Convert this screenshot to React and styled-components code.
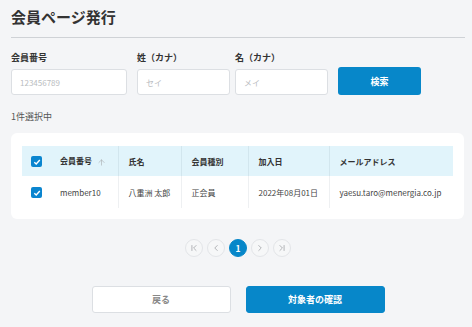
import React from 'react'
import styled, { createGlobalStyle } from 'styled-components'
import { ArrowUp, ChevronFirst, ChevronLast, ChevronLeft, ChevronRight } from 'lucide-react'

const GlobalStyle = createGlobalStyle`
  body {
    margin: 0;
    background: #f4f5f7;
    font-family: "Noto Sans CJK JP", "Noto Sans", sans-serif;
    color: #333;
  }
  * { box-sizing: border-box; }
`

const columns = [
  { key: 'id', label: '会員番号', width: 68, sort: true },
  { key: 'name', label: '氏名', width: 63 },
  { key: 'type', label: '会員種別', width: 67 },
  { key: 'joined', label: '加入日', width: 81 },
  { key: 'mail', label: 'メールアドレス', width: 124 },
]

const rows = [
  {
    id: 'member10',
    name: '八重洲 太郎',
    type: '正会員',
    joined: '2022年08月01日',
    mail: 'yaesu.taro@menergia.co.jp',
  },
]

export default function App() {
  return (
    <Page>
      <GlobalStyle />
      <Header>
        <Title>会員ページ発行</Title>
      </Header>

      <SearchForm>
        <Field $w={116} $mr={10}>
          <Label>会員番号</Label>
          <Input placeholder="123456789" />
        </Field>
        <Field $w={93} $mr={5}>
          <Label>姓（カナ）</Label>
          <Input placeholder="セイ" />
        </Field>
        <Field $w={93} $mr={10}>
          <Label>名（カナ）</Label>
          <Input placeholder="メイ" />
        </Field>
        <SearchBtn>検索</SearchBtn>
      </SearchForm>

      <SelectedCount>1件選択中</SelectedCount>

      <Card>
        <Table>
          <colgroup>
            <col style={{ width: 28 }} />
            {columns.map((c) => (
              <col key={c.key} style={{ width: c.width }} />
            ))}
          </colgroup>
          <thead>
            <tr>
              <Th $first>
                <Check />
              </Th>
              {columns.map((c, i) => (
                <Th key={c.key} $line={i > 0}>
                  {c.label}
                  {c.sort && (
                    <SortIcon>
                      <ArrowUp size={9} strokeWidth={1.6} />
                    </SortIcon>
                  )}
                </Th>
              ))}
            </tr>
          </thead>
          <tbody>
            {rows.map((r) => (
              <tr key={r.id}>
                <Td $first>
                  <Check />
                </Td>
                {columns.map((c, i) => (
                  <Td key={c.key} $line={i > 0}>
                    {r[c.key]}
                  </Td>
                ))}
              </tr>
            ))}
          </tbody>
        </Table>
      </Card>

      <Pager>
        <PageBtn>
          <ChevronFirst size={10} strokeWidth={1.8} />
        </PageBtn>
        <PageBtn>
          <ChevronLeft size={10} strokeWidth={1.8} />
        </PageBtn>
        <PageBtn $active>1</PageBtn>
        <PageBtn>
          <ChevronRight size={10} strokeWidth={1.8} />
        </PageBtn>
        <PageBtn>
          <ChevronLast size={10} strokeWidth={1.8} />
        </PageBtn>
      </Pager>

      <Actions>
        <ActionBtn>戻る</ActionBtn>
        <ActionBtn $primary>対象者の確認</ActionBtn>
      </Actions>
    </Page>
  )
}

function Check() {
  return (
    <CheckBox>
      <svg width="8" height="8" viewBox="0 0 8 8">
        <path d="M1.3 4.2 L3.2 6 L6.8 2" fill="none" stroke="#fff" strokeWidth="1.4" />
      </svg>
    </CheckBox>
  )
}

const Page = styled.div`
  padding: 0 7px 14px 11px;
  width: 472px;
`

const Header = styled.div`
  padding: 7px 0 10px;
  border-bottom: 1px solid #cfd2d6;
`

const Title = styled.h1`
  margin: 0;
  font-size: 15px;
  line-height: 20px;
  font-weight: 700;
  color: #333;
`

const SearchForm = styled.div`
  display: flex;
  align-items: flex-end;
  margin-top: 13px;
`

const Field = styled.div`
  display: flex;
  flex-direction: column;
  width: ${(p) => p.$w}px;
  margin-right: ${(p) => p.$mr}px;
`

const Label = styled.label`
  font-size: 9px;
  line-height: 14px;
  font-weight: 700;
  color: #333;
  margin-bottom: 4px;
`

const Input = styled.input`
  height: 26px;
  border: 1px solid #dcdfe3;
  border-radius: 3px;
  background: #fff;
  padding: 0 8px;
  font-family: inherit;
  font-size: 8px;
  outline: none;

  &::placeholder {
    color: #b9bcc0;
  }
`

const SearchBtn = styled.button`
  width: 83px;
  height: 28px;
  border: none;
  border-radius: 3px;
  background: #0787c9;
  color: #fff;
  font-family: inherit;
  font-size: 9px;
  font-weight: 700;
`

const SelectedCount = styled.div`
  margin-top: 15px;
  font-size: 9px;
  line-height: 14px;
  color: #555;
`

const Card = styled.div`
  margin-top: 9px;
  width: 453px;
  background: #fff;
  border-radius: 6px;
  padding: 13px 11px 11px;
`

const Table = styled.table`
  width: 431px;
  border-collapse: collapse;
  table-layout: fixed;
`

const Th = styled.th`
  height: 30px;
  background: #e1f4fb;
  padding: 0 0 0 ${(p) => (p.$first ? 9 : 10)}px;
  text-align: left;
  font-size: 8px;
  font-weight: 700;
  color: #333;
  white-space: nowrap;
  border-left: ${(p) => (p.$line ? '1px solid #d2e6ee' : 'none')};
`

const Td = styled.td`
  height: 32px;
  padding: 0 0 0 ${(p) => (p.$first ? 9 : 10)}px;
  font-size: 8px;
  color: #444;
  white-space: nowrap;
  border-left: ${(p) => (p.$line ? '1px solid #eef0f2' : 'none')};
`

const SortIcon = styled.span`
  display: inline-flex;
  vertical-align: middle;
  margin-left: 5px;
  color: #a6a9ad;
`

const CheckBox = styled.span`
  display: inline-flex;
  align-items: center;
  justify-content: center;
  width: 11px;
  height: 11px;
  border-radius: 2px;
  background: #0a85cf;
  vertical-align: middle;
`

const Pager = styled.div`
  display: flex;
  justify-content: center;
  gap: 4px;
  margin-top: 20px;
`

const PageBtn = styled.div`
  width: 18px;
  height: 18px;
  border-radius: 50%;
  display: flex;
  align-items: center;
  justify-content: center;
  border: 1px solid ${(p) => (p.$active ? '#0787c9' : '#e3e5e8')};
  background: ${(p) => (p.$active ? '#0787c9' : '#f6f7f8')};
  color: ${(p) => (p.$active ? '#fff' : '#9a9da1')};
  font-size: 8.5px;
  font-weight: 700;
`

const Actions = styled.div`
  display: flex;
  justify-content: center;
  gap: 15px;
  margin-top: 29px;
`

const ActionBtn = styled.button`
  width: 139px;
  height: 27px;
  border-radius: 3px;
  border: 1px solid ${(p) => (p.$primary ? '#0787c9' : '#dcdfe3')};
  background: ${(p) => (p.$primary ? '#0787c9' : '#fff')};
  color: ${(p) => (p.$primary ? '#fff' : '#888')};
  font-family: inherit;
  font-size: 9px;
  font-weight: 700;
`
